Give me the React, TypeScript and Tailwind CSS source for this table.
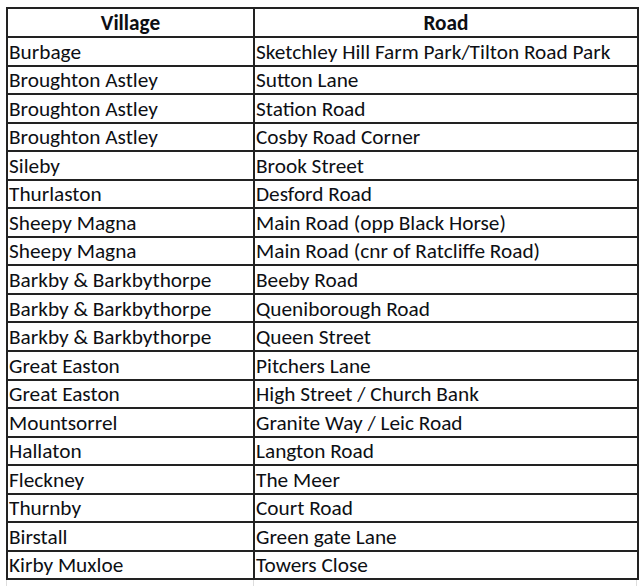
const rows: [string, string][] = [
  ["Burbage", "Sketchley Hill Farm Park/Tilton Road Park"],
  ["Broughton Astley", "Sutton Lane"],
  ["Broughton Astley", "Station Road"],
  ["Broughton Astley", "Cosby Road Corner"],
  ["Sileby", "Brook Street"],
  ["Thurlaston", "Desford Road"],
  ["Sheepy Magna", "Main Road (opp Black Horse)"],
  ["Sheepy Magna", "Main Road (cnr of Ratcliffe Road)"],
  ["Barkby & Barkbythorpe", "Beeby Road"],
  ["Barkby & Barkbythorpe", "Queniborough Road"],
  ["Barkby & Barkbythorpe", "Queen Street"],
  ["Great Easton", "Pitchers Lane"],
  ["Great Easton", "High Street / Church Bank"],
  ["Mountsorrel", "Granite Way / Leic Road"],
  ["Hallaton", "Langton Road"],
  ["Fleckney", "The Meer"],
  ["Thurnby", "Court Road"],
  ["Birstall", "Green gate Lane"],
  ["Kirby Muxloe", "Towers Close"],
]

export default function App() {
  return (
    <div className="h-[586px] w-[640px] overflow-hidden bg-white pt-[7px] pl-[6px] font-['Carlito','Open_Sans',sans-serif] text-[21.3px] text-[#0d0f14]">
      <table className="w-[631px] table-fixed border-collapse">
        <colgroup>
          <col className="w-[247px]" />
          <col className="w-[384px]" />
        </colgroup>
        <thead>
          <tr className="h-[29px]">
            <th className="border-2 border-[#222] p-0 pt-[2px] text-center leading-none font-bold">Village</th>
            <th className="border-2 border-[#222] p-0 pt-[2px] text-center leading-none font-bold">Road</th>
          </tr>
        </thead>
        <tbody>
          {rows.map(([village, road], i) => (
            <tr key={i} className="h-[28.55px]">
              <td className="border-2 border-[#222] pr-[3px] pl-[1px] pt-[2px] pb-0 leading-none whitespace-nowrap">{village}</td>
              <td className="border-2 border-[#222] pr-[3px] pl-[1px] pt-[2px] pb-0 leading-none whitespace-nowrap">{road}</td>
            </tr>
          ))}
        </tbody>
      </table>
      <div className="flex h-[6px]">
        <div className="w-[247px] border-l border-[#ddd]" />
        <div className="w-[384px] border-l border-r border-[#ddd]" />
      </div>
    </div>
  )
}
